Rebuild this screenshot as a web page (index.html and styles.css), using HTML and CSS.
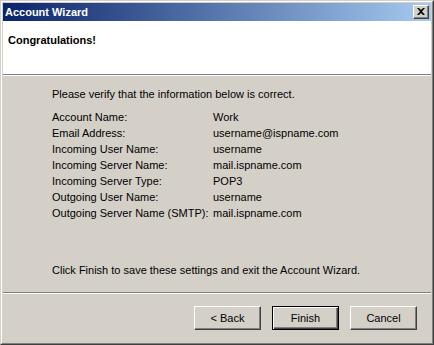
FILE: index.html
```html
<!DOCTYPE html>
<html>
<head>
<meta charset="utf-8">
<link rel="stylesheet" href="styles.css">
</head>
<body>
<div class="window">
  <div class="frame">
    <div class="titlebar">
      <span class="title">Account Wizard</span>
      <span class="close">
        <svg width="8" height="7" viewBox="0 0 8 7"><path d="M0 0h2l2 2 2-2h2L5 3.5 8 7H6L4 5 2 7H0l3-3.5z" fill="#000"/></svg>
      </span>
    </div>
    <div class="header">
      <div class="heading">Congratulations!</div>
    </div>
    <div class="content">
      <p class="intro">Please verify that the information below is correct.</p>
      <div class="details">
        <span>Account Name:</span><span>Work</span>
        <span>Email Address:</span><span>username@ispname.com</span>
        <span>Incoming User Name:</span><span>username</span>
        <span>Incoming Server Name:</span><span>mail.ispname.com</span>
        <span>Incoming Server Type:</span><span>POP3</span>
        <span>Outgoing User Name:</span><span>username</span>
        <span>Outgoing Server Name (SMTP):</span><span>mail.ispname.com</span>
      </div>
      <p class="outro">Click Finish to save these settings and exit the Account Wizard.</p>
    </div>
    <div class="buttons">
      <button class="btn">&lt; Back</button>
      <button class="btn default">Finish</button>
      <button class="btn">Cancel</button>
    </div>
  </div>
</div>
</body>
</html>
```

FILE: styles.css
```css
* { box-sizing: border-box; }
html, body { margin: 0; padding: 0; }
body {
  width: 434px;
  height: 345px;
  font-family: Tahoma, "Liberation Sans", Arial, sans-serif;
  font-size: 11px;
  color: #000;
  background: #d4d0c8;
}
.window {
  width: 434px;
  height: 345px;
  border: 1px solid;
  border-color: #d4d0c8 #404040 #404040 #d4d0c8;
}
.frame {
  height: 100%;
  border: 1px solid;
  border-color: #fff #808080 #808080 #fff;
  padding: 1px;
  background: #d4d0c8;
  display: flex;
  flex-direction: column;
}
.titlebar {
  height: 18px;
  flex: none;
  background: linear-gradient(to right, #0a246a, #a6caf0);
  display: flex;
  align-items: center;
  justify-content: space-between;
  padding: 0 2px 0 2px;
}
.title {
  color: #fff;
  font-weight: bold;
  font-size: 11px;
  line-height: 13px;
}
.close {
  width: 16px;
  height: 14px;
  background: #d4d0c8;
  border: 1px solid;
  border-color: #fff #404040 #404040 #fff;
  box-shadow: inset -1px -1px 0 #808080;
  display: flex;
  align-items: center;
  justify-content: center;
  padding: 0 1px 1px 0;
}
.close svg { display: block; }
.header {
  height: 55px;
  flex: none;
  background: #fff;
  border-bottom: 1px solid #fff;
  box-shadow: inset 0 -1px 0 #808080;
  padding: 13px 0 0 5px;
}
.heading {
  font-weight: bold;
  line-height: 13px;
}
.content {
  flex: 1;
  padding: 12px 0 0 49px;
  border-bottom: 1px solid #fff;
  box-shadow: inset 0 -1px 0 #808080;
}
.intro, .outro {
  margin: 0;
  line-height: 13px;
}
.details {
  display: grid;
  grid-template-columns: 161px auto;
  grid-auto-rows: 16px;
  align-items: center;
  margin-top: 8px;
  line-height: 13px;
}
.outro {
  margin-top: 43px;
}
.buttons {
  height: 48px;
  flex: none;
  display: flex;
  justify-content: flex-end;
  gap: 11px;
  padding: 12px 14px 0 0;
}
.btn {
  width: 67px;
  height: 24px;
  font-family: inherit;
  font-size: 11px;
  color: #000;
  background: #d4d0c8;
  border: 1px solid;
  border-color: #fff #404040 #404040 #fff;
  box-shadow: inset -1px -1px 0 #808080;
  padding: 0;
  margin: 0;
  border-radius: 0;
}
.btn.default {
  border-color: #000;
  box-shadow: inset 1px 1px 0 #fff, inset -1px -1px 0 #404040, inset -2px -2px 0 #808080;
}
```
